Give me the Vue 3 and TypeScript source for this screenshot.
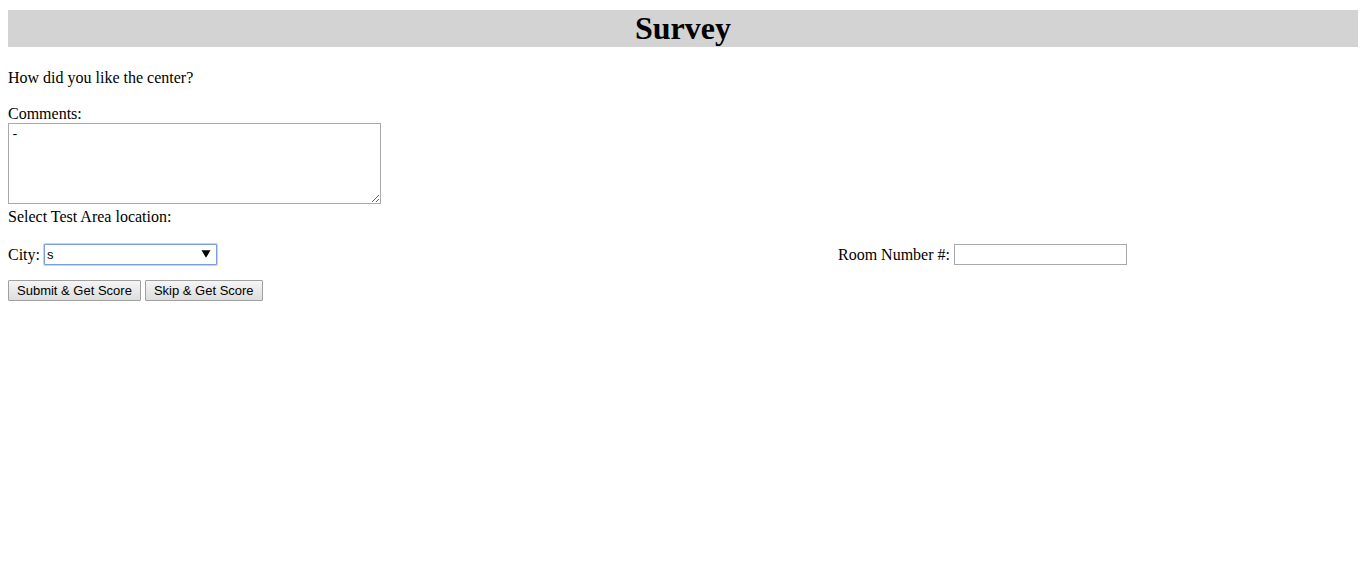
<script setup lang="ts">
import { ref } from 'vue'

const comments = ref<string>('-')
const city = ref<string>('s')
const room = ref<string>('')
const cities: string[] = ['Sacramento', 'San Diego', 'Seattle']
</script>

<template>
  <main class="page">
    <h1 class="title">Survey</h1>
    <form class="form" @submit.prevent>
      <p class="question">How did you like the center?</p>
      <label class="line" for="comments">Comments:</label>
      <textarea id="comments" v-model="comments" class="comments"></textarea>
      <p class="line">Select Test Area location:</p>
      <div class="location">
        <div class="field">
          <label for="city">City:</label>
          <span class="combo">
            <input id="city" v-model="city" class="box active" type="text" list="cities" autocomplete="off" />
            <svg class="arrow" viewBox="0 0 10 8" aria-hidden="true"><path d="M0.5 0.3H9.5L5 7.8Z" /></svg>
          </span>
          <datalist id="cities">
            <option v-for="name in cities" :key="name" :value="name"></option>
          </datalist>
        </div>
        <div class="field">
          <label for="room">Room Number #:</label>
          <input id="room" v-model="room" class="box" type="text" />
        </div>
      </div>
      <div class="actions">
        <button class="button" type="submit">Submit &amp; Get Score</button>
        <button class="button" type="button">Skip &amp; Get Score</button>
      </div>
    </form>
  </main>
</template>

<style>
body {
  margin: 0;
  background: #fff;
}
</style>

<style scoped>
.page {
  padding: 10px 7px 8px 8px;
  font-family: "Liberation Serif", "Times New Roman", serif;
  font-size: 16px;
  line-height: 18px;
  color: #000;
}
.title {
  margin: 0 0 22px;
  background: #d3d3d3;
  font-size: 32px;
  line-height: 37px;
  font-weight: bold;
  text-align: center;
}
.form {
  display: flex;
  flex-direction: column;
  align-items: flex-start;
}
.question {
  margin: 0 0 18px;
}
.line {
  margin: 0;
}
.comments {
  box-sizing: border-box;
  width: 373px;
  height: 81px;
  margin: 0 0 4px;
  padding: 3px 2px;
  border: 1px solid #a9a9a9;
  border-radius: 0;
  background: #fff;
  color: #000;
  font-family: "Liberation Mono", "Courier New", monospace;
  font-size: 13px;
  line-height: 15px;
  outline: none;
  resize: both;
}
.location {
  display: grid;
  grid-template-columns: 830fr 520fr;
  width: 100%;
  margin: 18px 0 15px;
}
.field {
  display: flex;
  align-items: center;
  gap: 4px;
}
.combo {
  position: relative;
  display: flex;
}
.box {
  box-sizing: border-box;
  width: 173px;
  height: 21px;
  margin: 0;
  padding: 1px 2px;
  border: 1px solid #a9a9a9;
  background: #fff;
  color: #000;
  font-family: "Liberation Sans", Arial, sans-serif;
  font-size: 13px;
  outline: none;
}
.active {
  border-color: #7b9fd9;
  border-radius: 1px;
  box-shadow: 0 0 0 1px #c3d4ef;
}
.active::-webkit-calendar-picker-indicator {
  opacity: 0;
}
.arrow {
  position: absolute;
  top: 6px;
  right: 6px;
  width: 10px;
  height: 8px;
  pointer-events: none;
}
.actions {
  display: flex;
  gap: 4px;
}
.button {
  box-sizing: border-box;
  height: 21px;
  margin: 0;
  padding: 0 8px;
  border: 1px solid #a0a0a0;
  border-radius: 1px;
  background: linear-gradient(#f5f5f5, #dddddd);
  color: #000;
  font-family: "Liberation Sans", Arial, sans-serif;
  font-size: 13px;
  line-height: 19px;
}
</style>
